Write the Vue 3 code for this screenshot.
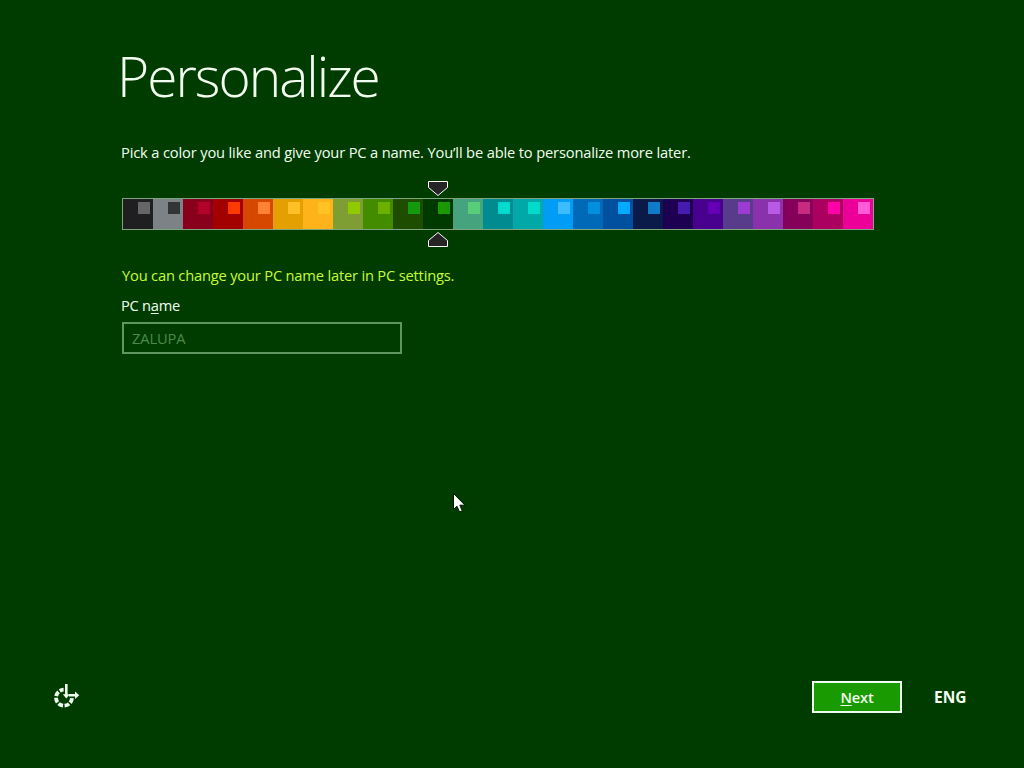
<template>
  <div class="setup">
    <main class="content">
      <h1>Personalize</h1>
      <p class="intro">Pick a color you like and give your PC a name. You’ll be able to personalize more later.</p>

      <div class="picker">
        <div class="swatches">
          <button
            v-for="(color, index) in colors"
            :key="index"
            class="swatch"
            :style="{ backgroundColor: color[0] }"
            @click="selected = index"
          >
            <span class="accent" :style="{ backgroundColor: color[1] }"></span>
          </button>
        </div>
        <svg class="marker" :style="{ left: markerLeft }" width="20" height="67" viewBox="0 0 20 67">
          <path d="M0.5 0.5H19.5V6.5L10 14.5L0.5 6.5Z" />
          <path d="M0.5 65.5H19.5V59.5L10 51.5L0.5 59.5Z" />
        </svg>
      </div>

      <p class="hint">You can change your PC name later in PC settings.</p>
      <label class="name-label" for="pc-name">PC n<u>a</u>me</label>
      <input id="pc-name" v-model="pcName" type="text" spellcheck="false" />
    </main>

    <footer class="footer">
      <!-- ease of access -->
      <svg class="access" width="26" height="26" viewBox="0 0 26 26">
        <path class="ring" d="M18 15.2A8 8 0 1 1 9.6 6.7" />
        <path class="line" d="M12.3 1V13M15 12.3H21.5" />
        <path class="head" d="M21 8.6L25.3 12.3L21 16Z" />
        <path class="head" d="M8.8 11.2L12.3 15.4L15.8 11.2Z" />
      </svg>
      <button class="next"><span><u>N</u>ext</span></button>
      <span class="lang">ENG</span>
    </footer>

    <svg class="cursor" width="13" height="20" viewBox="0 0 13 20">
      <path d="M0.5 0.5V16.5L4 13.2L6.5 19L9.3 17.8L6.8 12.2H12Z" />
    </svg>
  </div>
</template>

<script setup>
import { computed, ref } from 'vue';

const pcName = ref('ZALUPA');
const selected = ref(10);

// [background, accent]
const colors = [
  ['#1f1f21', '#666666'],
  ['#7c8286', '#333435'],
  ['#89001d', '#b4002c'],
  ['#a30000', '#fa3a00'],
  ['#d64800', '#ff8133'],
  ['#e3a000', '#ffbf26'],
  ['#ffb31a', '#ffc424'],
  ['#7e9d32', '#8fc900'],
  ['#438c00', '#6cb000'],
  ['#1f4d00', '#159a0c'],
  ['#003a00', '#189a00'],
  ['#45a37d', '#59cd78'],
  ['#008b91', '#00dbd0'],
  ['#00a9a7', '#00dccb'],
  ['#009cf5', '#3dbdff'],
  ['#0069b7', '#008fdd'],
  ['#00509f', '#00aaff'],
  ['#0b1b49', '#107bc8'],
  ['#1d0052', '#451bb0'],
  ['#48008e', '#6300b5'],
  ['#573c8b', '#9e3bd0'],
  ['#8a32ac', '#b85ae5'],
  ['#850058', '#c82a80'],
  ['#ab005f', '#ff00a9'],
  ['#ed0098', '#ff5dd8']
];

const markerLeft = computed(() => selected.value * 30 + 6 + 'px');
</script>

<style>
body {
  background: #003c00;
}
</style>

<style scoped>
.setup {
  display: flex;
  flex-direction: column;
  box-sizing: border-box;
  height: 100vh;
  overflow: hidden;
  background: #003c00;
  color: #f2fff0;
  font-family: "Open Sans", "Noto Sans", sans-serif;
  font-size: 14.67px;
}

.content {
  flex: 1;
  padding: 40px 150px 0 121px;
}

h1 {
  margin: 0 0 0 -4px;
  height: 102px;
  line-height: 72px;
  font-size: 55px;
  font-weight: 300;
  letter-spacing: -2px;
}

p {
  margin: 0;
  line-height: 20px;
  white-space: nowrap;
}

.intro {
  letter-spacing: -0.15px;
}

.picker {
  position: relative;
  width: 752px;
  margin: 36px 0 35px 1px;
}

.swatches {
  display: flex;
  border: 1px solid #7fa57f;
}

.swatch {
  width: 30px;
  height: 30px;
  padding: 3px 3px 0 15px;
  border: 0;
}

.accent {
  display: block;
  width: 12px;
  height: 12px;
  margin-bottom: 15px;
}

.marker {
  position: absolute;
  top: -17px;
  fill: #272426;
  stroke: #fff;
}

.hint {
  margin-left: 1px;
  color: #c9fb35;
  letter-spacing: -0.18px;
}

.name-label {
  display: block;
  margin-top: 10px;
  line-height: 20px;
  letter-spacing: -0.25px;
}

u {
  text-underline-offset: 2px;
  text-decoration-thickness: 1px;
}

input {
  display: block;
  box-sizing: border-box;
  width: 280px;
  height: 32px;
  margin: 7px 0 0 1px;
  padding: 0 8px;
  border: 2px solid #5f965f;
  outline: none;
  background: transparent;
  color: #4b8a4b;
  font: inherit;
  letter-spacing: -0.1px;
}

.footer {
  display: flex;
  align-items: center;
  height: 32px;
  padding: 0 57px 55px 54px;
}

.access {
  margin: 0 auto 2px 0;
}

.access .ring {
  fill: none;
  stroke: #effeec;
  stroke-width: 3.8;
  stroke-dasharray: 4.9 1.6;
}

.access .line {
  fill: none;
  stroke: #effeec;
  stroke-width: 2.6;
}

.access .head {
  fill: #effeec;
}

.next {
  width: 90px;
  height: 32px;
  padding: 0;
  border: 2px solid #effeec;
  background: #189a00;
  color: #f2fff0;
  font: inherit;
  font-weight: 600;
  letter-spacing: -0.2px;
}

.lang {
  width: 33px;
  margin: 0 0 1px 32px;
  font-size: 15.5px;
  font-weight: 700;
}

.cursor {
  position: absolute;
  left: 453px;
  top: 493px;
  fill: #fff;
  stroke: #001500;
}
</style>
